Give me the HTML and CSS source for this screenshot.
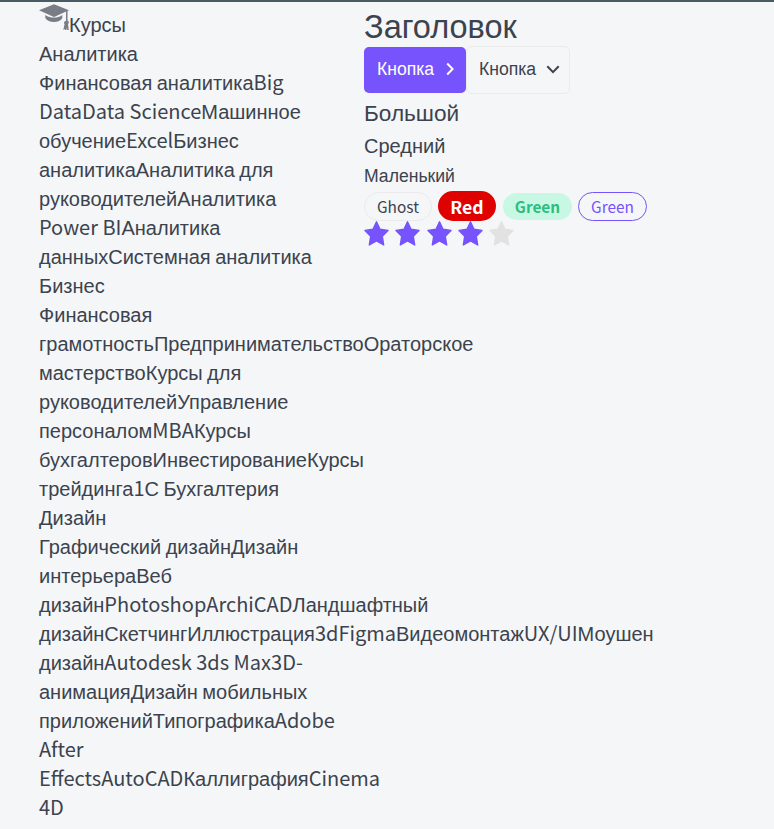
FILE: index.html
```html
<!DOCTYPE html>
<html lang="ru">
<head>
<meta charset="utf-8">
<title>Курсы</title>
<link rel="stylesheet" href="styles.css">
</head>
<body>
<div class="layout">
  <nav class="menu">
    <div class="menu-head">
      <svg class="cap" viewBox="0 0 30 30" fill="#787d86"><path d="M15 1.2 30 7.2 15 14 0 7.2Z"/><path d="M6.3 12c2.5 1.8 5.8 2.6 8.7 2.6s6-.8 8.3-2.6v3c-1.3 2.5-4.6 4-8.3 4s-7.3-1.5-8.7-4Z"/><path d="M27 8h1.5v9.5c1.7.8 1.6 2.7.5 3.5l.8 6h-1.5l-.5-2-.5 2h-1.2l-.4-1-1.4 1 1.3-6c-1-.9-1-2.5 1.4-3.3Z"/></svg><span>Курсы</span>
    </div>
    <div class="group">
      <div>Аналитика</div>
      <div class="links">Финансовая аналитика<b>Big</b><br><b>DataData Science</b>Машинное<br>обучение<b>Excel</b>Бизнес<br>аналитикаАналитика для<br>руководителейАналитика<br><b>Power BI</b>Аналитика<br>данныхСистемная аналитика</div>
    </div>
    <div class="group">
      <div>Бизнес</div>
      <div class="links">Финансовая<br>грамотностьПредпринимательствоОраторское<br>мастерствоКурсы для<br>руководителейУправление<br>персоналом<b>MBA</b>Курсы<br>бухгалтеровИнвестированиеКурсы<br>трейдинга<b>1</b>С Бухгалтерия</div>
    </div>
    <div class="group">
      <div>Дизайн</div>
      <div class="links">Графический дизайнДизайн<br>интерьераВеб<br>дизайн<b>PhotoshopArchiCAD</b>Ландшафтный<br>дизайнСкетчингИллюстрация<b>3dFigma</b>Видеомонтаж<b>UX/UI</b>Моушен<br>дизайн<b>Autodesk 3ds Max3D-</b><br>анимацияДизайн мобильных<br>приложенийТипографика<b>Adobe</b><br><b>After</b><br><b>EffectsAutoCAD</b>Каллиграфия<b>Cinema</b><br><b>4D</b></div>
    </div>
  </nav>
  <main class="content">
    <h1>Заголовок</h1>
    <div class="buttons">
      <button class="btn primary">Кнопка<svg class="right" viewBox="0 0 8 14"><path d="m1.2 1.5 5.4 5.5-5.4 5.5"/></svg></button>
      <button class="btn ghost">Кнопка<svg class="down" viewBox="0 0 14 9"><path d="m1.3 1.3 5.7 5.8 5.7-5.8"/></svg></button>
    </div>
    <p class="large">Большой</p>
    <p class="medium">Средний</p>
    <p class="small">Маленький</p>
    <div class="tags">
      <span class="tag tag-ghost">Ghost</span>
      <span class="tag tag-red">Red</span>
      <span class="tag tag-green">Green</span>
      <span class="tag tag-outline">Green</span>
    </div>
    <div class="rating">
      <svg viewBox="0 0 25 25"><path d="m12.5.8 3.5 7.4 8 1.2-5.7 5.9 1.4 8.7-7.2-4-7.2 4 1.4-8.7L1 9.4l8-1.2Z"/></svg>
      <svg viewBox="0 0 25 25"><path d="m12.5.8 3.5 7.4 8 1.2-5.7 5.9 1.4 8.7-7.2-4-7.2 4 1.4-8.7L1 9.4l8-1.2Z"/></svg>
      <svg viewBox="0 0 25 25"><path d="m12.5.8 3.5 7.4 8 1.2-5.7 5.9 1.4 8.7-7.2-4-7.2 4 1.4-8.7L1 9.4l8-1.2Z"/></svg>
      <svg viewBox="0 0 25 25"><path d="m12.5.8 3.5 7.4 8 1.2-5.7 5.9 1.4 8.7-7.2-4-7.2 4 1.4-8.7L1 9.4l8-1.2Z"/></svg>
      <svg class="empty" viewBox="0 0 25 25"><path d="m12.5.8 3.5 7.4 8 1.2-5.7 5.9 1.4 8.7-7.2-4-7.2 4 1.4-8.7L1 9.4l8-1.2Z"/></svg>
    </div>
  </main>
</div>
</body>
</html>
```
FILE: styles.css
```css
* { box-sizing: border-box; }
body {
  margin: 0;
  height: 829px;
  overflow: hidden;
  background: #f5f6f8;
  border-top: 2px solid #4b5b64;
  color: #3b434e;
  font: 20px/29px "Liberation Sans", Arial, sans-serif;
}
.layout { display: grid; grid-template-columns: 325px 1fr; padding-left: 39px; }
.menu { white-space: nowrap; word-spacing: -1.1px; padding-top: 1px; }
.menu-head { display: flex; height: 37px; }
.menu-head span { padding-top: 8px; }
.cap { width: 30px; height: 30px; flex: none; }
.menu b {
  font-family: "Noto Sans CJK KR", sans-serif;
  font-weight: 400;
  line-height: 20px;
  word-spacing: 0;
}
h1 { margin: 0; height: 45px; font-size: 32.5px; font-weight: 400; line-height: 44px; padding-top: 3px; }
.buttons { display: flex; align-items: center; height: 48px; margin-top: -1px; }
.btn {
  display: flex;
  align-items: center;
  height: 46px;
  padding: 0 12px 2px 13px;
  border: 0;
  border-radius: 5px;
  font: 17.6px "Liberation Sans", Arial, sans-serif;
}
.btn svg { fill: none; stroke: currentColor; stroke-width: 2; }
.primary { width: 102px; justify-content: space-between; background: #7653fc; color: #fff; }
.ghost { width: 104px; height: 48px; justify-content: space-between; padding: 0 9px 2px 12px; border: 1px solid #ebebeb; background: transparent; color: #3b434e; }
.right { width: 8px; height: 14px; }
.down { width: 14px; height: 9px; }
p { margin: 0; }
.large { font-size: 22.6px; line-height: 32px; padding-top: 4px; }
.medium { font-size: 20px; line-height: 29px; padding-top: 2px; }
.small { font-size: 17.6px; line-height: 26px; padding-top: 2px; }
.tags { display: flex; align-items: center; height: 30px; margin-top: 2px; }
.tag {
  display: flex;
  align-items: center;
  justify-content: center;
  height: 29px;
  border-radius: 15px;
  font: 15.4px/23px "Noto Sans CJK KR", sans-serif;
}
.tag-ghost { width: 68px; border: 1px solid #ebebeb; margin-right: 6px; }
.tag-red { width: 58px; height: 30px; background: #df0000; color: #fff; font-size: 17.6px; font-weight: 700; margin-right: 7px; }
.tag-green { width: 69px; height: 27px; background: #c8f8e4; color: #2cbe80; font-weight: 700; margin-right: 6px; }
.tag-outline { width: 69px; border: 1px solid #7653fc; color: #7653fc; }
.rating { display: flex; gap: 6.3px; }
.rating svg { width: 25px; height: 25px; fill: #7653fc; stroke: #7653fc; stroke-width: 1.4; stroke-linejoin: round; }
.rating .empty { fill: #e2e2e2; stroke: #e2e2e2; }
```
